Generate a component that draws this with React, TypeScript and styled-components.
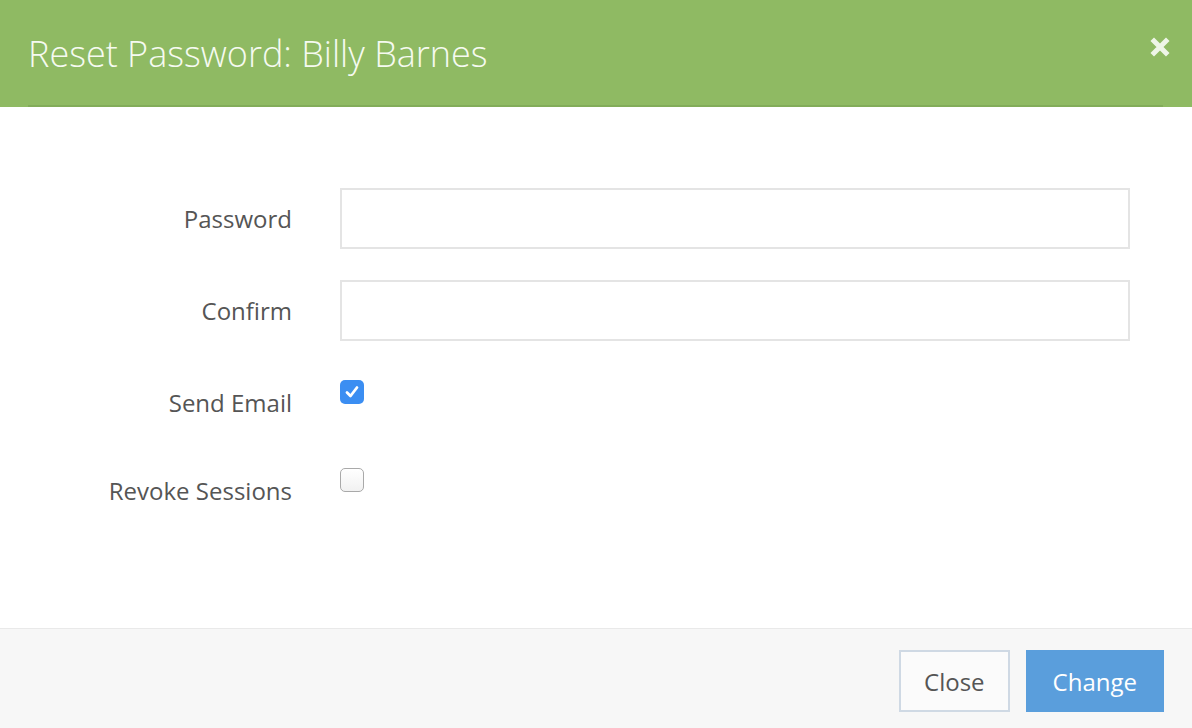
import styled, { createGlobalStyle } from "styled-components";

const GlobalStyle = createGlobalStyle`
  html, body {
    margin: 0;
    padding: 0;
    background: #ffffff;
  }
  body {
    font-family: "Open Sans", "Liberation Sans", sans-serif;
  }
`;

const Modal = styled.div`
  width: 1192px;
  height: 728px;
  display: flex;
  flex-direction: column;
  background: #ffffff;
  overflow: hidden;
`;

const Header = styled.header`
  height: 107px;
  flex-shrink: 0;
  background-color: #8fba63;
  display: flex;
  flex-direction: column;
  padding: 0 22px 0 28px;
  box-sizing: border-box;
`;

const HeaderRow = styled.div`
  flex: 1;
  display: flex;
  align-items: center;
  justify-content: space-between;
`;

const Title = styled.h1`
  margin: 0;
  font-family: "Open Sans", "Liberation Sans", sans-serif;
  font-weight: 300;
  font-size: 36px;
  color: #f6faf1;
  padding-top: 1px;
`;

const HeaderLine = styled.div`
  height: 2px;
  margin-right: 7px;
  background-color: #82ac59;
`;

const CloseIcon = styled.button`
  border: 0;
  background: none;
  padding: 0;
  width: 20px;
  height: 20px;
  margin-top: -12px;
  cursor: pointer;
  color: #eef5e7;
  display: flex;
`;

const Body = styled.main`
  flex: 1;
  padding: 81px 62px 0 0;
  display: flex;
  flex-direction: column;
`;

const Row = styled.div<{ $check?: boolean; $gap: number }>`
  display: grid;
  grid-template-columns: 292px 1fr;
  column-gap: 48px;
  align-items: ${(p) => (p.$check ? "start" : "center")};
  height: ${(p) => (p.$check ? "56px" : "61px")};
  margin-bottom: ${(p) => p.$gap}px;
`;

const Label = styled.label<{ $check?: boolean }>`
  text-align: right;
  font-size: 24px;
  line-height: 30px;
  color: #555555;
  margin-top: ${(p) => (p.$check ? "8px" : "0")};
`;

const Input = styled.input`
  box-sizing: border-box;
  height: 61px;
  width: 100%;
  border: 2px solid #e4e4e4;
  background: #ffffff;
  font-size: 22px;
  padding: 0 16px;
  outline: none;
`;

const CheckBox = styled.span<{ $checked?: boolean }>`
  box-sizing: border-box;
  width: 24px;
  height: 24px;
  border-radius: 5px;
  display: flex;
  align-items: center;
  justify-content: center;
  background: ${(p) =>
    p.$checked ? "#3b8ef2" : "linear-gradient(#ffffff, #f1f1f1)"};
  border: ${(p) => (p.$checked ? "none" : "1.5px solid #a9a9a9")};
`;

const Footer = styled.footer`
  height: 100px;
  flex-shrink: 0;
  box-sizing: border-box;
  border-top: 1px solid #e9e9e9;
  background: #f7f7f7;
  display: flex;
  align-items: flex-start;
  justify-content: flex-end;
  gap: 16px;
  padding: 21px 28px 0 0;
`;

const Button = styled.button<{ $primary?: boolean }>`
  box-sizing: border-box;
  height: 62px;
  padding: 0 ${(p) => (p.$primary ? "25px" : "23px")};
  font-family: "Open Sans", "Liberation Sans", sans-serif;
  font-size: 24px;
  cursor: pointer;
  color: ${(p) => (p.$primary ? "#ffffff" : "#555555")};
  background: ${(p) => (p.$primary ? "#5a9edc" : "#fbfbfb")};
  border: 2px solid ${(p) => (p.$primary ? "#5a9edc" : "#cfd9e4")};
`;

export default function App() {
  return (
    <Modal>
      <GlobalStyle />
      <Header>
        <HeaderRow>
          <Title>Reset Password: Billy Barnes</Title>
          <CloseIcon aria-label="close">
            <svg width="20" height="20" viewBox="0 0 20 20">
              <path
                d="M4 4 L16 16 M16 4 L4 16"
                stroke="currentColor"
                strokeWidth="5"
                strokeLinecap="square"
                fill="none"
              />
            </svg>
          </CloseIcon>
        </HeaderRow>
        <HeaderLine />
      </Header>
      <Body>
        <Row $gap={31}>
          <Label>Password</Label>
          <Input type="password" />
        </Row>
        <Row $gap={39}>
          <Label>Confirm</Label>
          <Input type="password" />
        </Row>
        <Row $check $gap={32}>
          <Label $check>Send Email</Label>
          <CheckBox $checked>
            <svg width="18" height="18" viewBox="0 0 18 18">
              <path
                d="M4 9.5 L7.5 13 L14 4.5"
                stroke="#ffffff"
                strokeWidth="2.8"
                strokeLinecap="round"
                strokeLinejoin="round"
                fill="none"
              />
            </svg>
          </CheckBox>
        </Row>
        <Row $check $gap={0}>
          <Label $check>Revoke Sessions</Label>
          <CheckBox />
        </Row>
      </Body>
      <Footer>
        <Button>Close</Button>
        <Button $primary>Change</Button>
      </Footer>
    </Modal>
  );
}
